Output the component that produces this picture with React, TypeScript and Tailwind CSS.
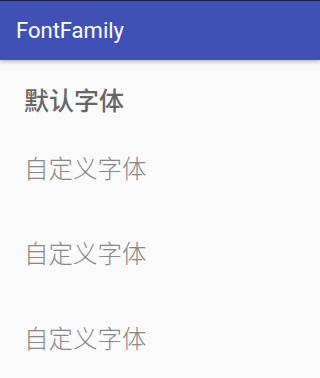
export default function App() {
  const rows = ['自定义字体', '自定义字体', '自定义字体'];

  return (
    <div className="flex min-h-[378px] w-full flex-col bg-[#fafafa] font-['Roboto','Noto_Sans_CJK_SC',sans-serif]">
      <div className="h-px bg-[#1a1f4a]" />
      <header className="relative z-10 flex h-[59px] items-center bg-[#3f51b5] px-4 shadow-[0_2px_4px_rgba(0,0,0,0.25)]">
        <h1 className="text-[22px] leading-none text-white">FontFamily</h1>
      </header>

      <main className="flex flex-col gap-[53px] px-6">
        <p className="mt-[26px] mb-[-17px] text-[25px] leading-[32px] font-medium text-[#666666]">默认字体</p>
        {rows.map((label, i) => (
          <p key={i} className="text-[24.5px] leading-[32px] font-light text-[#888888]">
            {label}
          </p>
        ))}
      </main>
    </div>
  );
}
